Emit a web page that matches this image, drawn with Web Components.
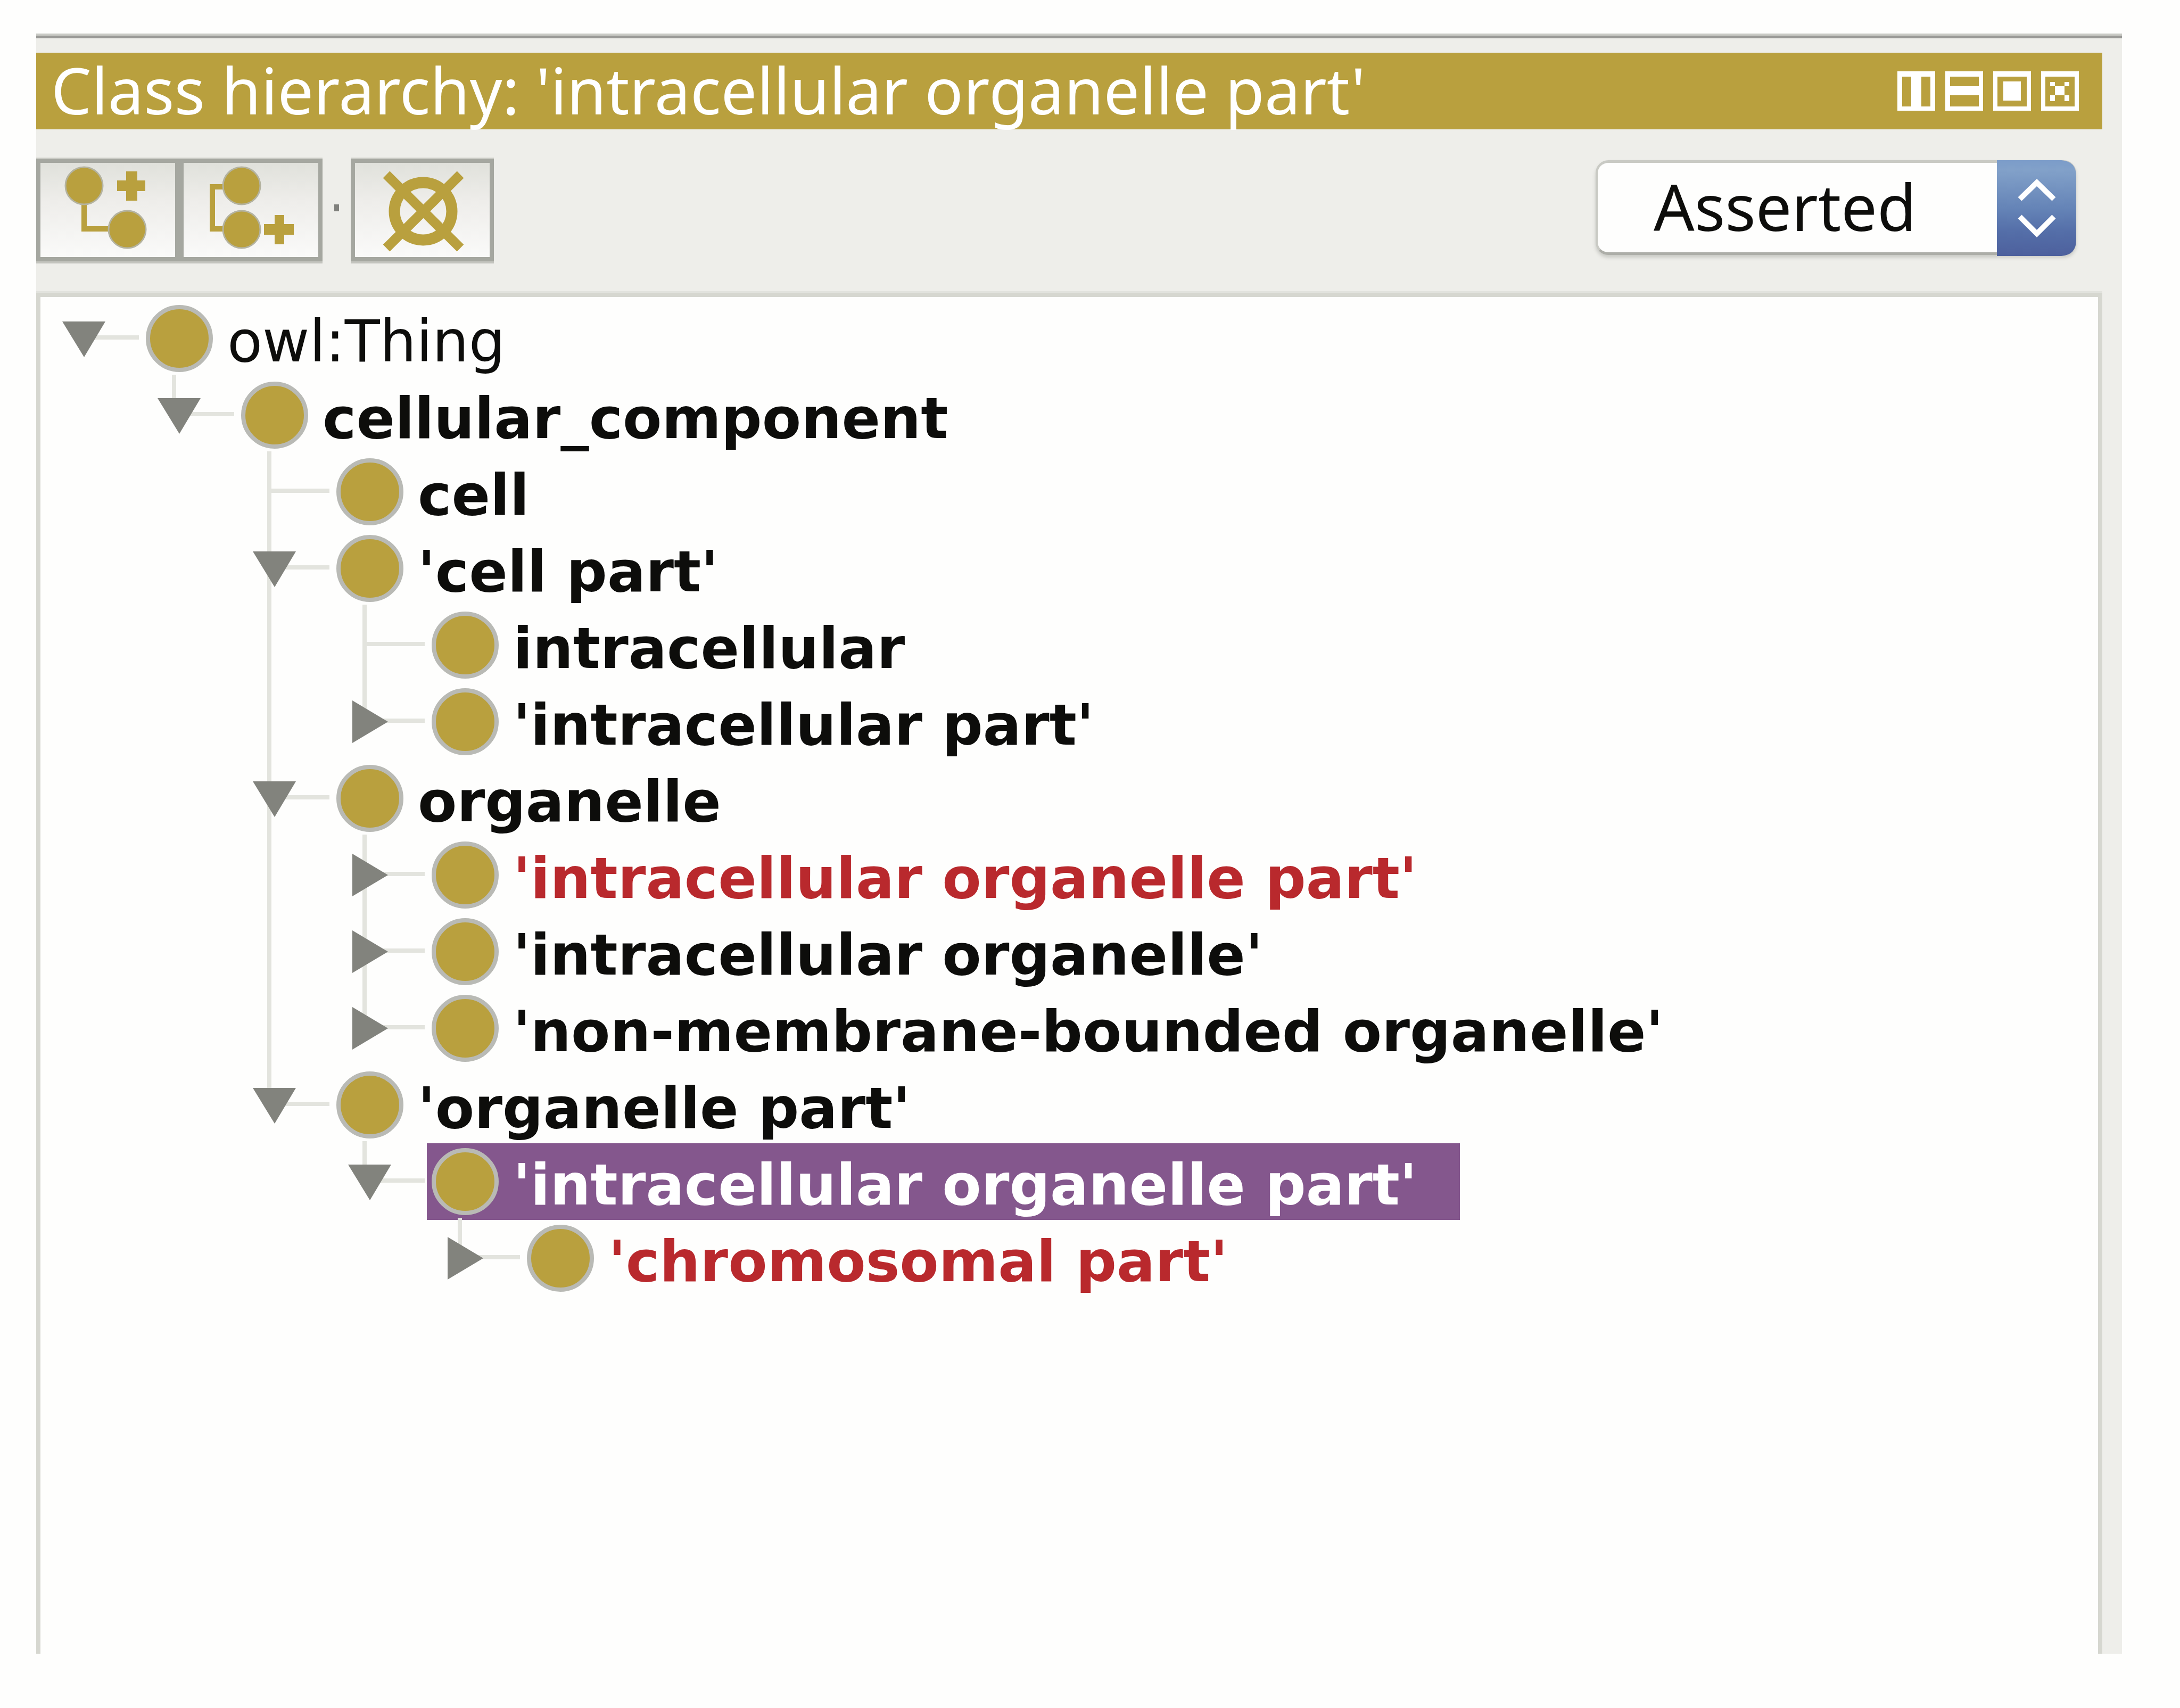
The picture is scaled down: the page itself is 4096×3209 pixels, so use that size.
<!DOCTYPE html>
<html lang="en">
<head>
<meta charset="utf-8">
<title>Class hierarchy</title>
<style>
  :root { --gold: #b9a03e; --panel: #eeeeea; --edge: #d6d7d0; --paper: #fefefd; --ink: #0d0d0b; }
  body {
    margin: 0; box-sizing: border-box; min-height: 100vh;
    padding: 67px 109px 102px 68px;
    display: flex; flex-direction: column;
    background: #fefefd; color: var(--ink);
    font-family: "Noto Sans", sans-serif; font-size: 120px;
  }
</style>
</head>
<body>
<hierarchy-panel>
  <panel-title slot="title">Class hierarchy: 'intracellular organelle part'</panel-title>
  <panel-toolbar slot="toolbar"></panel-toolbar>
  <class-tree>
    <class-node state="open" weight="normal" last>
      <span slot="label">owl:Thing</span>
      <class-node state="open" last>
        <span slot="label">cellular_component</span>
        <class-node><span slot="label">cell</span></class-node>
        <class-node state="open">
          <span slot="label">'cell part'</span>
          <class-node><span slot="label">intracellular</span></class-node>
          <class-node state="closed" last><span slot="label">'intracellular part'</span></class-node>
        </class-node>
        <class-node state="open">
          <span slot="label">organelle</span>
          <class-node state="closed" tone="alert"><span slot="label">'intracellular organelle part'</span></class-node>
          <class-node state="closed"><span slot="label">'intracellular organelle'</span></class-node>
          <class-node state="closed" last><span slot="label">'non-membrane-bounded organelle'</span></class-node>
        </class-node>
        <class-node state="open" last>
          <span slot="label">'organelle part'</span>
          <class-node state="open" tone="selected" last>
            <span slot="label">'intracellular organelle part'</span>
            <class-node state="closed" tone="alert" last><span slot="label">'chromosomal part'</span></class-node>
          </class-node>
        </class-node>
      </class-node>
    </class-node>
  </class-tree>
</hierarchy-panel>

<script>
  function define(name, html, ready) {
    const template = document.createElement('template');
    template.innerHTML = html;
    customElements.define(name, class extends HTMLElement {
      constructor() {
        super();
        this.attachShadow({ mode: 'open' }).append(template.content.cloneNode(true));
      }
      connectedCallback() { if (ready) ready(this, this.shadowRoot); }
    });
  }

  define('hierarchy-panel', `
    <style>
      :host {
        flex: 1; display: flex; flex-direction: column;
        padding: 27px 37px 0 0;
        background: var(--panel);
        border-top: 5px solid #999996;
        box-shadow: 0 -4px 0 #c9cac5;
      }
    </style>
    <slot name="title"></slot>
    <slot name="toolbar"></slot>
    <slot></slot>`);

  define('panel-title', `
    <style>
      :host { display: flex; align-items: center; justify-content: space-between; height: 144px; padding: 0 44px 0 28px; background: var(--gold); color: #fff; }
      h1 { margin: 0; padding-bottom: 4px; font: inherit; line-height: 140px; white-space: nowrap; }
      nav { display: flex; gap: 19px; }
      button { display: block; margin: 0; padding: 0; border: 0; background: none; color: inherit; }
      svg { display: block; width: 71px; height: 74px; fill: currentColor; fill-rule: evenodd; }
    </style>
    <h1><slot></slot></h1>
    <nav>
      <button aria-label="Split vertically"><svg viewBox="0 0 71 74"><path d="M0 0H71V74H0zM9 10V66H26V10zM45 10V66H62V10z"/></svg></button>
      <button aria-label="Split horizontally"><svg viewBox="0 0 71 74"><path d="M0 0H71V74H0zM9 10V28H63V10zM9 45V66H63V45z"/></svg></button>
      <button aria-label="Float"><svg viewBox="0 0 71 74"><path d="M0 0H71V74H0zM8 10V66H63V10zM19 19H52V55H19z"/></svg></button>
      <button aria-label="Close"><svg viewBox="0 0 71 74"><path d="M0 0H71V74H0zM8 10V66H63V10zM17 20H26V28H44V20H53V28H44V45H53V56H44V45H26V56H17V45H26V28H17z"/></svg></button>
    </nav>`);

  define('tool-button', `
    <style>
      :host { display: block; }
      button {
        display: block; box-sizing: border-box; width: 269px; height: 193px; margin: 0; padding: 0;
        border: 8px solid #a5a7a0; border-radius: 0;
        background: linear-gradient(#e0e1db, #eeedea 40%, #fafaf9);
        box-shadow: 0 -2px 0 #d6d7d1, 0 4px 0 #c3c4be;
      }
    </style>
    <button><slot></slot></button>`, (host, root) => {
      root.querySelector('button').setAttribute('aria-label', host.getAttribute('label'));
    });

  define('view-select', `
    <style>
      :host { display: grid; width: 903px; height: 178px; padding-bottom: 12px; }
      select, svg { grid-area: 1 / 1; }
      select {
        appearance: none; box-sizing: border-box; width: 100%; height: 178px; margin: 0;
        padding: 0 149px 14px 105px;
        border: 5px solid #c9cac4; border-left-width: 4px; border-bottom-color: #adaea8; border-radius: 24px;
        background: var(--paper); color: var(--ink); font: inherit;
        box-shadow: 0 5px 6px #c9cac5;
      }
      svg { display: block; justify-self: end; width: 149px; height: 180px; pointer-events: none; }
    </style>
    <select aria-label="View mode"><option>Asserted</option><option>Inferred</option></select>
    <svg viewBox="0 0 149 180">
      <defs><linearGradient id="g" x1="0" y1="0" x2="0" y2="1">
        <stop offset="0" stop-color="#7b9cc9"/><stop offset=".1" stop-color="#82a1c9"/>
        <stop offset=".5" stop-color="#6584b7"/><stop offset=".75" stop-color="#546ea8"/>
        <stop offset="1" stop-color="#4d609d"/></linearGradient></defs>
      <path fill="url(#g)" d="M0 0H121Q149 2 149 30V150Q149 178 121 180H0z"/>
      <path fill="none" stroke="#fff" stroke-width="10" d="M43 73L75 42L107 73M43 106L75 138L107 106"/>
    </svg>`);

  define('panel-toolbar', `
    <style>
      :host { display: flex; align-items: flex-start; padding: 55px 49px 59px 0; }
      i { width: 9px; height: 13px; margin: 86px 22px 0; background: #80817d; }
      view-select { margin: 3px 0 0 auto; }
      svg { display: block; fill: var(--gold); }
      .line { fill: none; stroke: var(--gold); stroke-width: 10; }
      .ring { stroke: #b4b3a0; stroke-width: 3; }
    </style>
    <tool-button label="Add subclass"><svg width="253" height="177" viewBox="0 0 253 177">
      <path class="line" d="M82 70V124H140"/>
      <circle class="ring" cx="82" cy="43" r="35"/><circle class="ring" cx="163" cy="125" r="35"/>
      <path d="M161 16h21v17h15v20h-15v18h-21v-18h-17v-20h17z"/></svg></tool-button>
    <tool-button label="Add sibling class"><svg width="253" height="177" viewBox="0 0 253 177">
      <path class="line" d="M80 45H54V124H80"/>
      <circle class="ring" cx="109" cy="43" r="35"/><circle class="ring" cx="109" cy="125" r="35"/>
      <path d="M171 98h18v17h18v20h-18v18h-18v-18h-20v-20h20z"/></svg></tool-button>
    <i></i>
    <tool-button label="Delete class"><svg width="253" height="177" viewBox="0 0 253 177">
      <circle class="line" style="stroke-width:21" cx="128" cy="91" r="54"/>
      <path class="line" style="stroke-width:18" d="M59 22L198 160M198 22L59 160"/></svg></tool-button>
    <view-select></view-select>`);

  define('class-tree', `
    <style>
      :host {
        flex: 1; display: block; padding: 6px 0 0 40px;
        border: 8px solid var(--edge); border-bottom: 0;
        background: var(--paper); box-shadow: 0 -3px 0 #e2e3de;
        font-family: "DejaVu Sans", sans-serif; font-size: 107px; font-weight: bold;
      }
    </style>
    <div role="tree"><slot></slot></div>`);

  const arrows = {
    open: '<path class="wire" d="M42 66H145V74H42z"/><path d="M1 40H82L42 107z"/>',
    closed: '<path class="wire" d="M42 66H145V74H42z"/><path d="M9 32L76 72L9 112z"/>',
    leaf: '<path class="wire" d="M28 66H145V74H28z"/>'
  };

  define('class-node', `
    <style>
      :host { display: block; position: relative; }
      :host::before { content: ""; position: absolute; left: 28px; top: -4px; bottom: 0; width: 8px; background: #e3e4de; }
      :host([last])::before { bottom: auto; height: 76px; }
      :host([weight=normal])::before { display: none; }
      .row { position: relative; display: flex; height: 144px; }
      .toggle { display: block; width: 149px; height: 144px; margin: 0; padding: 0; border: 0; background: none; }
      svg { display: block; width: 149px; height: 144px; fill: #82837d; }
      .wire { fill: #e3e4de; }
      .item { display: flex; align-items: center; gap: 27px; padding: 0 80px 0 9px; color: var(--ink); white-space: nowrap; }
      .dot { box-sizing: border-box; width: 126px; height: 126px; border: 8px solid #b9bab5; border-radius: 50%; background: var(--gold); }
      .text { padding-top: 12px; line-height: 130px; }
      .children { padding-left: 179px; }
      :host([weight=normal]) .text { font-size: 108px; font-weight: normal; }
      :host([tone=alert]) .item { color: #b9292d; }
      :host([tone=selected]) .item { background: #84578d; color: #fff; }
    </style>
    <div class="row">
      <span class="gutter"></span>
      <div class="item"><span class="dot"></span><span class="text"><slot name="label"></slot></span></div>
    </div>
    <div class="children" role="group"><slot></slot></div>`, (host, root) => {
      const state = host.getAttribute('state') || 'leaf';
      const box = document.createElement(state === 'leaf' ? 'span' : 'button');
      box.className = 'toggle';
      if (state !== 'leaf') {
        box.setAttribute('aria-label', 'Toggle');
        box.setAttribute('aria-expanded', state === 'open');
      }
      box.innerHTML = '<svg viewBox="0 0 149 144">' + arrows[state] + '</svg>';
      root.querySelector('.gutter').replaceChildren(box);
      host.setAttribute('role', 'treeitem');
    });
</script>
</body>
</html>
